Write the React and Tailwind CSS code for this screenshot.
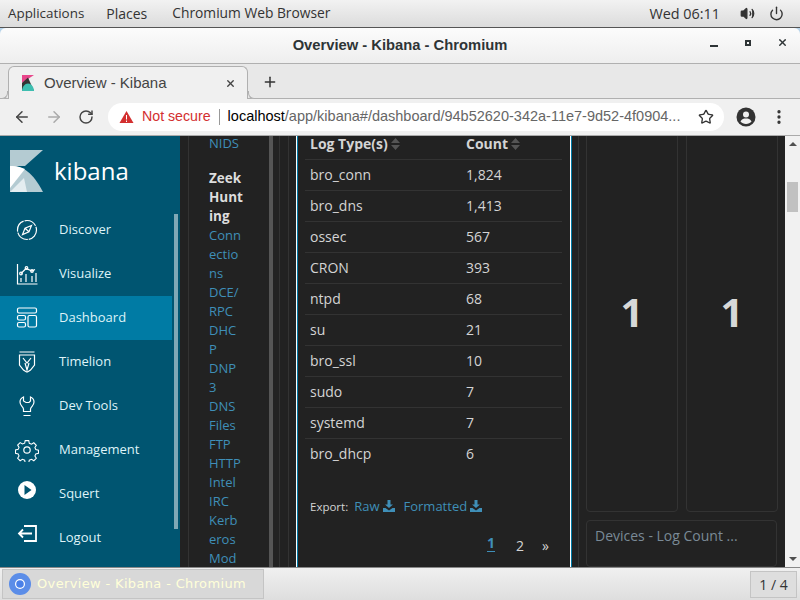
import React from "react";
import { ArrowLeft, ArrowRight, RotateCw, Star, Plus, X, MoreVertical, Power, Volume2 } from "lucide-react";

const rows = [["bro_conn","1,824"],["bro_dns","1,413"],["ossec","567"],["CRON","393"],["ntpd","68"],["su","21"],["bro_ssl","10"],["sudo","7"],["systemd","7"],["bro_dhcp","6"]];
const links = ["Conn","ectio","ns","DCE/","RPC","DHC","P","DNP","3","DNS","Files","FTP","HTTP","Intel","IRC","Kerb","eros","Mod"];

const S = { fill:"none", stroke:"white", strokeWidth:1.2 };
const icons = {
  Discover: <svg width="24" height="24" viewBox="0 0 24 24" {...S}><circle cx="12" cy="12" r="9.500" strokeDasharray="13 1"/><path d="M16.500 7.500l-6.500 2.800-2.500 6.200 6.500-2.800zM10 10.300l4 3.400"/></svg>,
  Visualize: <svg width="24" height="24" viewBox="0 0 24 24" {...S}><path d="M2.500 2v20h20"/><path d="M6 11.500L11 6.500l6 2.500 3-1.500" /><circle cx="6" cy="11.500" r="1.300"/><circle cx="11.500" cy="6" r="1.300"/><circle cx="17" cy="9" r="1.300"/><path d="M6 16v4M11 12v8M17 14v6M21 11v9"/></svg>,
  Dashboard: <svg width="24" height="24" viewBox="0 0 24 24" {...S}><rect x="2.500" y="2" width="19" height="5" rx="1.500"/><rect x="2.500" y="9.500" width="8" height="4.500" rx="1.500"/><rect x="2.500" y="16.500" width="8" height="4.500" rx="1.500"/><rect x="13" y="9.500" width="8.500" height="11.500" rx="1.500"/></svg>,
  Timelion: <svg width="24" height="24" viewBox="0 0 24 24" {...S}><path d="M4.500 2h15M4.500 5h15v10l-4 5-3 2h-1l-3-2-4-5zM8 8l4 5 4-5M10 13l2 7 2-7"/></svg>,
  "Dev Tools": <svg width="24" height="24" viewBox="0 0 24 24" {...S}><path d="M8.500 3C6 4 5 6 5 8c0 3.500 3 4.500 3.500 7v2.500h7V15c.5-2.500 3.500-3.500 3.500-7 0-2-1-4-3.500-5v4l-1.500 1.500h-3L8.500 7zM8.500 21.500h7"/></svg>,
  Management: <svg width="24" height="24" viewBox="0 0 24 24" {...S}><circle cx="12" cy="12" r="3.200"/><path d="M10 1.500h4l.6 3 2.500 1 2.600-1.600 2.800 2.800-1.600 2.600 1 2.200 3 .7v3.500l-3 .7-1 2.300 1.600 2.600-2.800 2.800-2.600-1.600-2.500 1-.6 3h-4l-.6-3-2.500-1-2.600 1.600-2.800-2.800 1.600-2.600-1-2.300-3-.7V12l3-.7 1-2.200-1.600-2.600 2.800-2.800 2.600 1.600 2.500-1z" transform="translate(1.300 1.300) scale(.89)"/></svg>,
  Squert: <svg width="24" height="24" viewBox="0 0 24 24"><circle cx="12" cy="12" r="9" fill="white"/><path d="M9.500 7l7 5-7 5z" fill="#005571"/></svg>,
  Logout: <svg width="24" height="24" viewBox="0 0 24 24" fill="none" stroke="white" strokeWidth="1.800"><path d="M9 4h12v15H9"/><path d="M17 11.500H4M8 7.500l-4 4 4 4"/></svg>,
};

function Nav({ name, active, up }) {
  return (
    <div className={`h-11 flex items-center text-[13px] text-[#dff3f8] mr-2 ${active ? "bg-[#007ba4]" : ""}`}>
      <span className={`ml-[15px] w-6 h-6 shrink-0 ${up ? "-mt-2" : ""}`}>{icons[name]}</span>
      <span className="ml-5">{name}</span>
    </div>
  );
}

function Dl() {
  return <svg className="inline ml-[3px] -mt-[3px]" width="12" height="12" viewBox="0 0 12 12" fill="#3f8fb8"><path d="M4.500 0h3v4.500H10L6 8 2 4.500h2.500zM0 8h2.500L6 10.500 9.500 8H12v4H0z"/></svg>;
}

function Sort() {
  return <svg className="inline ml-[3px] -mt-[2px]" width="9" height="12" viewBox="0 0 9 12" fill="#555"><path d="M4.500 0l4.500 5H0zM4.500 12L0 7h9z"/></svg>;
}

function Stat() {
  return (
    <div className="w-[92px] h-[380px] -mt-1 border border-[#333] rounded flex items-center justify-center text-[#d8d8d8] text-[40px] font-bold pb-[20px]">
      1
    </div>
  );
}

export default function App() {
  return (
    <div className="w-[800px] h-[600px] overflow-hidden flex flex-col bg-[#e8e8e8]" style={{ fontFamily: '"Open Sans", sans-serif' }}>
      {/* GNOME top bar */}
      <div className="h-[28px] shrink-0 flex items-center bg-gradient-to-b from-[#f2f2f2] to-[#dcdcdc] border-b border-[#555] text-[#333] text-[14px] pl-2">
        <span className="text-[13.400px]">Applications</span>
        <span className="ml-[22px]">Places</span>
        <span className="ml-[25px] text-[13.800px]">Chromium Web Browser</span>
        <span className="ml-auto text-[14.400px]">Wed 06:11</span>
        <Volume2 className="ml-[20px]" size={15} fill="#333" strokeWidth={2} />
        <Power className="ml-[14px] mr-[16px]" size={15} strokeWidth={2.2} />
      </div>
      {/* title bar */}
      <div className="h-[36px] shrink-0 bg-[#b8d4ea]">
        <div className="h-full relative flex items-center justify-center bg-gradient-to-b from-[#fcfcfc] to-[#eeeeee] border-b border-[#b0b0b0] rounded-t-md font-bold text-[14.750px] text-[#2e3436]" style={{ fontFamily: '"Liberation Sans", sans-serif' }}>
          <span>Overview - Kibana - Chromium</span>
          <div className="absolute right-[12px] top-[9px] flex items-center">
            <span className="w-2 h-[2px] bg-[#2e3436] mt-[7px] mr-[27px]"/>
            <span className="w-[6px] h-[6px] border-2 border-[#2e3436] mr-[26px]"/>
            <X size={11} strokeWidth={3} />
          </div>
        </div>
      </div>
      {/* tab strip */}
      <div className="h-[35px] shrink-0 bg-[#e8e8e8] flex items-end border-b border-[#b0b0b0] relative">
        <span className="absolute left-0 -bottom-px w-2 h-2 border-b border-r border-[#b0b0b0] rounded-br-md bg-[#e8e8e8] z-20" />
        <span className="absolute left-[248px] -bottom-px w-2 h-2 border-b border-l border-[#b0b0b0] rounded-bl-md bg-[#e8e8e8] z-20" />
        <div className="ml-2 w-[240px] h-[33px] -mb-px bg-[#f0f0f0] border border-[#b0b0b0] border-b-0 rounded-t-md flex items-center pl-[12px] z-10 text-[15px] text-[#444]" style={{ fontFamily: '"Liberation Sans", sans-serif' }}>
          <svg width="14" height="16" viewBox="0 0 14 16"><path d="M1 0h12L1 8z" fill="#e8478b"/><path d="M1 8L7 2.500 13 16H1z" fill="#353535"/><path d="M1 16c0-4 3-7.500 6-7.500S13 12 13 16z" fill="#3ebeb0"/></svg>
          <span className="ml-[9px]">Overview - Kibana</span>
          <X className="ml-auto mr-[11px] text-[#444]" size={11} strokeWidth={3} />
        </div>
        <Plus className="ml-[14px] mb-[8px] text-[#333]" size={16} strokeWidth={2.2} />
      </div>
      {/* toolbar */}
      <div className="h-[37px] shrink-0 bg-[#f0f0f0] flex items-center pl-[13px] border-b border-[#aaa]">
        <ArrowLeft size={18} className="text-[#444]" strokeWidth={2} />
        <ArrowRight size={18} className="ml-[14px] text-[#aaa]" strokeWidth={2} />
        <RotateCw size={16} className="ml-[15px] text-[#444]" strokeWidth={2.2} />
        <div className="ml-[14px] w-[616px] h-7 bg-white rounded-full flex items-center text-[14px]" style={{ fontFamily: '"Liberation Sans", sans-serif' }}>
          <svg className="ml-[11px]" width="15" height="14" viewBox="0 0 15 14"><path d="M7.500 1L14.500 13H.5z" fill="#d32f2f"/><path d="M7 5h1v4.500H7zM7 10.500h1V12H7z" fill="white"/></svg>
          <span className="ml-[8px] text-[#d32f2f] text-[14.200px]">Not secure</span>
          <span className="w-px h-[16px] bg-[#999] ml-2"/>
          <span className="ml-2 text-black text-[14.500px]">localhost</span>
          <span className="text-[#666] text-[14.500px]">/app/kibana#/dashboard/94b52620-342a-11e7-9d52-4f0904...</span>
          <Star size={16} className="ml-auto mr-[10px] text-[#333]" strokeWidth={2} />
        </div>
        <svg className="ml-[12px]" width="20" height="20" viewBox="0 0 20 20"><circle cx="10" cy="10" r="9.500" fill="#333"/><circle cx="10" cy="7.500" r="3" fill="#f0f0f0"/><path d="M4.500 14.500c1-2.500 3.500-3 5.500-3s4.500.5 5.500 3c-1.200 1.500-3.300 2.500-5.500 2.500s-4.300-1-5.500-2.500z" fill="#f0f0f0"/></svg>
        <MoreVertical size={18} className="ml-[14px] text-[#333]" strokeWidth={2.4} />
      </div>
      {/* page */}
      <div className="h-[431px] shrink-0 flex overflow-hidden bg-[#222]">
        <aside className="w-[180px] shrink-0 bg-[#005571] relative">
          <div className="h-[71px] pt-[14px] pl-[10px] flex">
            <svg width="33" height="42" viewBox="0 0 33 42"><path d="M0 0h33L15 16 0 16z" fill="#b4cbd2"/><path d="M0 16c10-1 22 4 33 26H0z" fill="#b4cbd2"/><path d="M0 16c6-.5 11 1 15 3L0 38z" fill="white"/><path d="M0 42l14-14 3 14z" fill="#e4edf0"/></svg>
            <span className="ml-[11px] mt-[5px] text-white text-[24px] font-medium leading-8">kibana</span>
          </div>
          <div className="pt-[1px]">
            {["Discover","Visualize","Dashboard","Timelion","Dev Tools","Management"].map(n => <Nav key={n} name={n} active={n==="Dashboard"} />)}
            <Nav name="Squert" up />
            <Nav name="Logout" up />
          </div>
          <div className="absolute left-[174px] top-[78px] w-1 h-[315px] bg-[#7fa8b6]" />
        </aside>
        <div className="w-[81px] shrink-0 ml-2 border-l border-[#333] pl-5 text-[13px] leading-[19px] text-[#3f8fb8] overflow-hidden">
          <div className="h-[15px] leading-[15px]">NIDS</div>
          <div className="mt-[18px] font-bold text-[13.500px] text-[#ddd]">Zeek</div>
          <div className="font-bold text-[13.500px] text-[#ddd]">Hunt</div>
          <div className="font-bold text-[13.500px] text-[#ddd]">ing</div>
          {links.map((l,i) => <div key={i}>{l}</div>)}
        </div>
        <div className="w-[4px] shrink-0 bg-[#555]" />
        <div className="w-[6px] shrink-0" />
        <div className="w-[9px] shrink-0 border-l border-[#333]" />
        <div className="w-[8px] shrink-0 border-l border-[#333]" />
        {/* table panel */}
        <div className="w-[276px] shrink-0 border-l border-l-white border-r border-r-[#0079a5] shadow-[inset_1px_0_0_#0079a5,inset_-1px_0_0_white] pl-[8px] text-[#d4d4d4] text-[14px]">
          <div className="w-[257px]">
            <div className="h-[24px] flex items-center font-bold leading-[14px] border-b border-[#333] pl-[5px] pb-[8px]">
              <span className="w-[156px]">Log Type(s)<Sort/></span>
              <span>Count<Sort/></span>
            </div>
            {rows.map(([a,b],i) => (
              <div key={a} className={`h-[31px] flex items-center pl-[5px] pb-[2px] ${i<9 ? "border-b border-[#333]" : ""}`}>
                <span className="w-[156px]">{a}</span>
                <span>{b}</span>
              </div>
            ))}
          </div>
          <div className="mt-[25px] text-[11.500px] pl-[5px] h-[24px] flex items-center">
            <span>Export:</span>
            <span className="ml-[6px] text-[13px] text-[#3f8fb8]">Raw<Dl/></span>
            <span className="ml-[9px] text-[13px] text-[#3f8fb8]">Formatted<Dl/></span>
          </div>
          <div className="mt-[16px] flex pl-[182px] text-[14px]">
            <span className="text-[#3f8fb8] font-bold border-b border-[#3f8fb8] leading-[15px] h-[17px]">1</span>
            <span className="ml-[21px]">2</span>
            <span className="ml-[18px]">»</span>
          </div>
        </div>
        <div className="w-[7px] shrink-0 border-r border-[#333]" />
        {/* right stats */}
        <div className="flex-1 min-w-0 px-[7px] flex flex-col">
          <div className="flex gap-[8px]">
            <Stat /><Stat />
          </div>
          <div className="mt-2 h-[60px] border border-[#333] rounded pl-[8px] pt-[4px] text-[14px] text-[#7a8a96] mr-[1px] whitespace-nowrap">Devices - Log Count ...</div>
        </div>
        {/* scrollbar */}
        <div className="w-[15px] shrink-0 bg-[#f1f1f1] relative">
          <span className="absolute left-[4px] top-[6px] w-0 h-0 border-x-[4px] border-x-transparent border-b-[4px] border-b-[#505050]" />
          <span className="absolute left-[2px] top-[46px] w-[11px] h-[30px] bg-[#c1c1c1]" />
          <span className="absolute left-[4px] bottom-[6px] w-0 h-0 border-x-[4px] border-x-transparent border-t-[4px] border-t-[#505050]" />
        </div>
      </div>
      {/* taskbar */}
      <div className="flex-1 bg-gradient-to-b from-[#f0f0f0] to-[#dedede] border-t border-[#888] flex items-center pl-[2px] pr-[3px]">
        <div className="w-[262px] h-[30px] bg-[#d8d8d8] border border-[#c4c4c4] flex items-center pl-[6px] text-[13px] tracking-[.35px] text-[#ffffd8]" style={{ fontFamily: '"DejaVu Sans", sans-serif' }}>
          <svg width="22" height="22" viewBox="0 0 22 22"><circle cx="11" cy="11" r="11" fill="#5b8de8"/><circle cx="11" cy="11" r="5" fill="#fff"/><circle cx="11" cy="11" r="3.800" fill="#4a80e8"/></svg>
          <span className="ml-[6px] whitespace-nowrap">Overview - Kibana - Chromium</span>
        </div>
        <div className="ml-auto w-[47px] h-[27px] bg-[#dedede] border border-[#c4c4c4] flex items-center justify-center text-[14px] text-[#333]">1 / 4</div>
      </div>
    </div>
  );
}
